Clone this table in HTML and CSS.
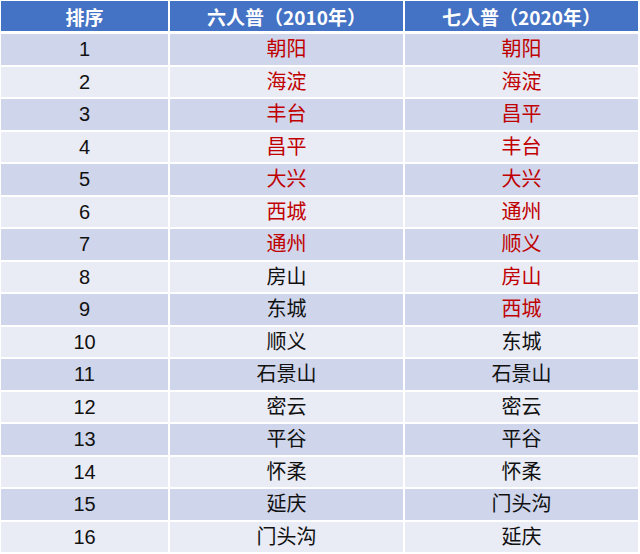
FILE: index.html
```html
<!DOCTYPE html>
<html lang="zh">
<head>
<meta charset="utf-8">
<title>排序</title>
<link rel="stylesheet" href="styles.css">
</head>
<body>
<div class="table">
  <div class="row head"><div class="cell">排序</div><div class="cell">六人普（2010年）</div><div class="cell">七人普（2020年）</div></div>
  <div class="row odd"><div class="cell">1</div><div class="cell red">朝阳</div><div class="cell red">朝阳</div></div>
  <div class="row even"><div class="cell">2</div><div class="cell red">海淀</div><div class="cell red">海淀</div></div>
  <div class="row odd"><div class="cell">3</div><div class="cell red">丰台</div><div class="cell red">昌平</div></div>
  <div class="row even"><div class="cell">4</div><div class="cell red">昌平</div><div class="cell red">丰台</div></div>
  <div class="row odd"><div class="cell">5</div><div class="cell red">大兴</div><div class="cell red">大兴</div></div>
  <div class="row even"><div class="cell">6</div><div class="cell red">西城</div><div class="cell red">通州</div></div>
  <div class="row odd"><div class="cell">7</div><div class="cell red">通州</div><div class="cell red">顺义</div></div>
  <div class="row even"><div class="cell">8</div><div class="cell">房山</div><div class="cell red">房山</div></div>
  <div class="row odd"><div class="cell">9</div><div class="cell">东城</div><div class="cell red">西城</div></div>
  <div class="row even"><div class="cell">10</div><div class="cell">顺义</div><div class="cell">东城</div></div>
  <div class="row odd"><div class="cell">11</div><div class="cell">石景山</div><div class="cell">石景山</div></div>
  <div class="row even"><div class="cell">12</div><div class="cell">密云</div><div class="cell">密云</div></div>
  <div class="row odd"><div class="cell">13</div><div class="cell">平谷</div><div class="cell">平谷</div></div>
  <div class="row even"><div class="cell">14</div><div class="cell">怀柔</div><div class="cell">怀柔</div></div>
  <div class="row odd"><div class="cell">15</div><div class="cell">延庆</div><div class="cell">门头沟</div></div>
  <div class="row even"><div class="cell">16</div><div class="cell">门头沟</div><div class="cell">延庆</div></div>
</div>
</body>
</html>
```

FILE: styles.css
```css
html, body {
  margin: 0;
  padding: 0;
  background: #ffffff;
}
.table {
  display: flex;
  flex-direction: column;
  gap: 2px;
  padding: 1px 2px 0 1px;
  width: 637px;
  font-family: "Liberation Sans", "Noto Sans CJK SC", sans-serif;
  font-size: 20px;
  color: #111111;
}
.row {
  display: grid;
  grid-template-columns: 167px 233px 233px;
  column-gap: 2px;
  height: 30.5px;
}
.cell {
  display: flex;
  align-items: center;
  justify-content: center;
  line-height: 1;
}
.head {
  height: 30px;
  margin-bottom: 1px;
  font-family: "Noto Sans CJK SC", sans-serif;
  font-size: 19px;
  font-weight: bold;
  color: #ffffff;
}
.head .cell { background: #4472c4; }
.odd .cell { background: #cfd5ea; }
.even .cell { background: #e9ebf5; }
.red { color: #c00000; }
```
